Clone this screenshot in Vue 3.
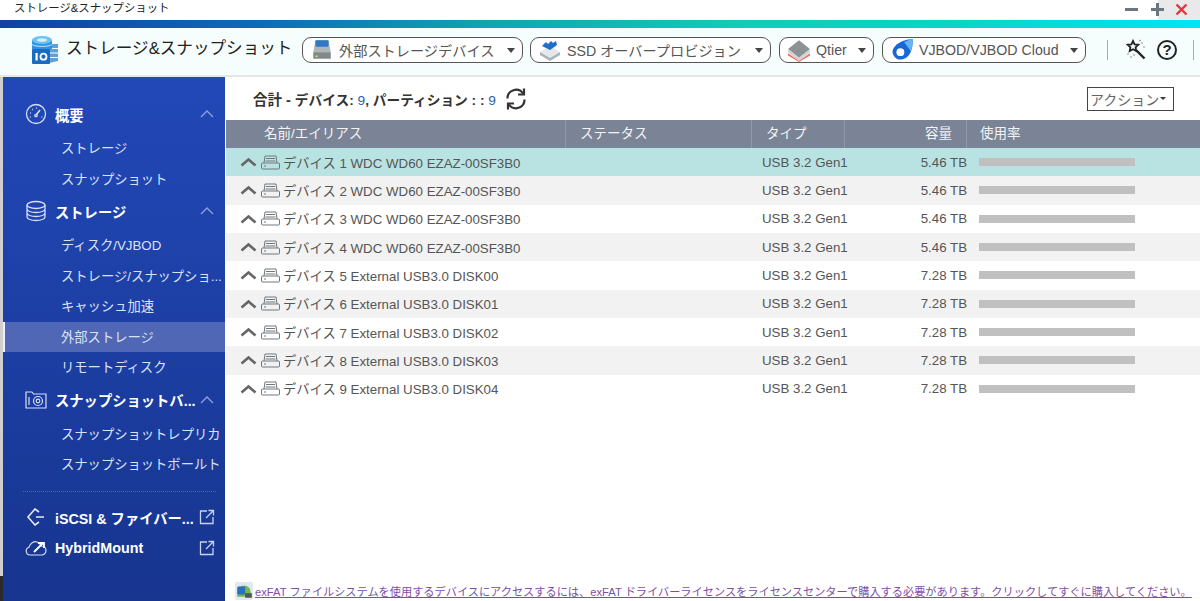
<script setup>
const overview = ['ストレージ', 'スナップショット']
const storage = [
  { label: 'ディスク/VJBOD' },
  { label: 'ストレージ/スナップショ...' },
  { label: 'キャッシュ加速' },
  { label: '外部ストレージ', active: true },
  { label: 'リモートディスク' },
]
const snapshot = ['スナップショットレプリカ', 'スナップショットボールト']

const devices = [
  { name: 'デバイス 1 WDC WD60 EZAZ-00SF3B0', size: '5.46 TB', selected: true },
  { name: 'デバイス 2 WDC WD60 EZAZ-00SF3B0', size: '5.46 TB' },
  { name: 'デバイス 3 WDC WD60 EZAZ-00SF3B0', size: '5.46 TB' },
  { name: 'デバイス 4 WDC WD60 EZAZ-00SF3B0', size: '5.46 TB' },
  { name: 'デバイス 5 External USB3.0 DISK00', size: '7.28 TB' },
  { name: 'デバイス 6 External USB3.0 DISK01', size: '7.28 TB' },
  { name: 'デバイス 7 External USB3.0 DISK02', size: '7.28 TB' },
  { name: 'デバイス 8 External USB3.0 DISK03', size: '7.28 TB' },
  { name: 'デバイス 9 External USB3.0 DISK04', size: '7.28 TB' },
]
</script>

<template>
  <div class="window">
    <div class="titlebar">
      <span class="title">ストレージ&スナップショット</span>
      <div class="win-btns">
        <span class="win-min"></span>
        <span class="win-max"></span>
        <svg class="win-close" width="13" height="13" viewBox="0 0 13 13">
          <path d="M1.5 1.5l10 10M11.5 1.5l-10 10" stroke="#e8343c" stroke-width="2.4" fill="none" />
        </svg>
      </div>
    </div>
    <div class="gradient"></div>

    <div class="toolbar">
      <svg class="app-icon" width="27" height="28" viewBox="0 0 27 28">
        <path d="M18 8h9v17l-9 2z" fill="#5f9fdc" />
        <path d="M19 12.5h8M19 17h8M19 21.5h8" stroke="#fff" stroke-width="1" />
        <path d="M1 4v9h20V4z" fill="#2d93e6" />
        <ellipse cx="11" cy="4" rx="10" ry="4" fill="#6cc3f2" />
        <ellipse cx="11" cy="4" rx="5" ry="1.8" fill="#d4effc" />
        <path d="M1 8.5c3 2.5 17 2.500 20 0" fill="none" stroke="#bfe4fa" stroke-width="1" />
        <rect x="1" y="13" width="18" height="15" rx="1" fill="#1a6cc0" />
        <rect x="4.5" y="17" width="2.2" height="7.5" fill="#fff" />
        <circle cx="12.5" cy="20.7" r="3" fill="none" stroke="#fff" stroke-width="1.8" />
      </svg>
      <span class="app-name">ストレージ&スナップショット</span>

      <button class="pill pill-ext">
        <svg width="24" height="24" viewBox="0 0 22 22">
          <path d="M3 13l2-11h12l2 11z" fill="#aeb6ba" />
          <rect x="5" y="2" width="12" height="6" rx="1" fill="#2f78c4" />
          <rect x="3" y="13" width="16" height="6" fill="#82898c" />
          <rect x="5" y="16" width="2" height="1.5" fill="#c4e84e" />
        </svg>
        <span>外部ストレージデバイス</span>
        <i class="caret"></i>
      </button>
      <button class="pill pill-ssd">
        <svg width="24" height="24" viewBox="0 0 24 22">
          <path d="M2 13l10-6 10 6-10 6z" fill="#e4e8ea" />
          <path d="M2 13v3l10 6 10-6v-3l-10 6z" fill="#a9b4b9" />
          <path d="M4 7l4-4 2 2 3-3 2 2 3-2 1 4-7 5z" fill="#1f6fc9" />
        </svg>
        <span>SSD オーバープロビジョン</span>
        <i class="caret"></i>
      </button>
      <button class="pill pill-qtier">
        <svg width="24" height="24" viewBox="0 0 22 22">
          <path d="M1 10l10-8 10 8-10 8z" fill="#8d9295" />
          <path d="M1 10v3l10 8 10-8v-3l-10 8z" fill="#cfd3d5" />
          <path d="M1 14v2l10 6 10-6v-2l-10 7z" fill="#ef6a55" />
        </svg>
        <span>Qtier</span>
        <i class="caret"></i>
      </button>
      <button class="pill pill-vjbod">
        <svg width="24" height="24" viewBox="0 0 22 22">
          <path d="M21 1c0 5-1 12-4 15-3 4-9 5-12 2S1 11 5 7c3-3 10-6 16-6z" fill="#1668d8" />
          <path d="M21 1c0 4-.5 8-2 11l-6-8c3-1.500 5.500-3 8-3z" fill="#67b4f0" />
          <circle cx="9.5" cy="13" r="3.6" fill="#fff" />
        </svg>
        <span>VJBOD/VJBOD Cloud</span>
        <i class="caret"></i>
      </button>

      <span class="divider"></span>
      <svg class="tool-icon" width="22" height="22" viewBox="0 0 22 22">
        <path d="M8 2l1.6 3.4 3.7.4-2.7 2.6.7 3.7L8 10.3l-3.3 1.8.7-3.7L2.7 5.800l3.7-.4z" fill="none" stroke="#222" stroke-width="1.8" />
        <path d="M11.5 11.5l8 8" stroke="#222" stroke-width="2.4" />
        <path d="M17 4h.01M19 8h.01M15 1.5h.01M3 15h.01M6 18h.01M9 16h.01" stroke="#777" stroke-width="1.5" stroke-linecap="round" />
      </svg>
      <span class="help">?</span>
      <span class="divider last"></span>
    </div>

    <div class="body">
      <div class="edge"></div>
      <aside class="sidebar">
        <div class="group">
          <svg class="group-icon" width="22" height="22" viewBox="0 0 22 22" fill="none" stroke="#d6def5" stroke-width="1.3">
            <circle cx="11" cy="11" r="9.5" />
            <path d="M11 12l4-5" stroke-width="1.6" />
            <circle cx="11" cy="12.5" r="1.2" />
            <path d="M5 10h.8M7 6.500h.8M11 5h.8M4.800 14h.8M16.500 14h.8" stroke-width="1.4" />
          </svg>
          <span class="group-label">概要</span>
          <svg class="chev" width="14" height="8" viewBox="0 0 14 8"><path d="M1 7l6-6 6 6" /></svg>
        </div>
        <div v-for="item in overview" :key="item" class="item">{{ item }}</div>

        <div class="group">
          <svg class="group-icon" width="22" height="22" viewBox="0 0 22 22" fill="none" stroke="#d6def5" stroke-width="1.3">
            <ellipse cx="11" cy="5" rx="9" ry="3.5" />
            <path d="M2 5v12c0 2 4 3.500 9 3.500s9-1.500 9-3.500V5M2 9c0 2 4 3.500 9 3.500S20 11 20 9M2 13c0 2 4 3.500 9 3.500s9-1.500 9-3.500" />
          </svg>
          <span class="group-label">ストレージ</span>
          <svg class="chev" width="14" height="8" viewBox="0 0 14 8"><path d="M1 7l6-6 6 6" /></svg>
        </div>
        <div v-for="item in storage" :key="item.label" class="item" :class="{ active: item.active }">{{ item.label }}</div>

        <div class="group">
          <svg class="group-icon" width="22" height="18" viewBox="0 0 22 18" fill="none" stroke="#d6def5" stroke-width="1.2">
            <path d="M1 1h6l1.500 2H21v14H1z" />
            <circle cx="13" cy="10" r="4.5" />
            <circle cx="13" cy="10" r="1.8" />
            <path d="M4 6v8" />
          </svg>
          <span class="group-label">スナップショットバ...</span>
          <svg class="chev" width="14" height="8" viewBox="0 0 14 8"><path d="M1 7l6-6 6 6" /></svg>
        </div>
        <div v-for="item in snapshot" :key="item" class="item">{{ item }}</div>

        <div class="sep"></div>

        <div class="group link">
          <svg class="group-icon" width="22" height="18" viewBox="0 0 22 18" fill="none" stroke="#e3e8f8" stroke-width="1.6">
            <path d="M14 4l-4-3-7 8 7 8 4-3M11 9h8" />
          </svg>
          <span class="group-label">iSCSI & ファイバー...</span>
          <svg class="ext" width="16" height="16" viewBox="0 0 16 16"><path d="M8 2H1.500v12.500H14V8M7 9l7.500-7.500M9.500 1.500h5v5" /></svg>
        </div>
        <div class="group link">
          <svg class="group-icon" width="22" height="16" viewBox="0 0 22 16" fill="none" stroke="#d6def5" stroke-width="1.2">
            <path d="M5 15a4 4 0 0 1-1-7.800C5 3 9 1 12 2c2 .5 3.500 2 4 4 3 0 5 2 5 4.500S19 15 17 15z" />
            <path d="M9 12l9-9M13 3h6v5" stroke="#fff" stroke-width="1.8" />
          </svg>
          <span class="group-label">HybridMount</span>
          <svg class="ext" width="16" height="16" viewBox="0 0 16 16"><path d="M8 2H1.500v12.500H14V8M7 9l7.500-7.500M9.500 1.500h5v5" /></svg>
        </div>
      </aside>

      <main class="main">
        <div class="summary">
          <div class="totals">
            <b class="total-label">合計 -</b>
            <span class="total-text">デバイス: <em>9</em>, パーティション : : <em>9</em></span>
            <svg class="refresh" width="22" height="24" viewBox="0 0 22 24" fill="none" stroke="#333" stroke-width="2.2">
              <path d="M2.500 11.500A8.500 8.500 0 0 1 18 6.500" />
              <path d="M19 1.500v6h-6" />
              <path d="M19.500 12.500A8.500 8.500 0 0 1 4 17.500" />
              <path d="M3 22.500v-6h6" />
            </svg>
          </div>
          <button class="action">アクション<i class="mini-caret"></i></button>
        </div>

        <div class="table">
          <div class="row head">
            <div class="c-name">名前/エイリアス</div>
            <div class="c-status">ステータス</div>
            <div class="c-type">タイプ</div>
            <div class="c-size">容量</div>
            <div class="c-usage">使用率</div>
          </div>
          <div v-for="d in devices" :key="d.name" class="row dev" :class="{ selected: d.selected }">
            <div class="c-name">
              <svg class="up" width="17" height="10" viewBox="0 0 17 10"><path d="M1.500 8.500L8.500 2.500l7 6" /></svg>
              <svg class="disk" width="19" height="15" viewBox="0 0 19 15" fill="none" stroke="#70787c" stroke-width="1">
                <path d="M3 8l1-7h11l1 7" />
                <path d="M5 3.500h9M4.500 6h10" />
                <rect x=".5" y="8" width="18" height="6" rx="1" />
                <path d="M3 11h2" />
              </svg>
              <span>{{ d.name }}</span>
            </div>
            <div class="c-status"></div>
            <div class="c-type">USB 3.2 Gen1</div>
            <div class="c-size">{{ d.size }}</div>
            <div class="c-usage"><span class="bar"></span></div>
          </div>
        </div>

        <div class="notice">
          <svg width="18" height="18" viewBox="0 0 16 16">
            <rect x="0" y="0" width="16" height="16" rx="2" fill="#dfe9f2" />
            <path d="M2 9a6 6 0 0 1 12 0v4H2z" fill="#72b84a" />
            <rect x="2" y="4" width="7" height="7" rx="1" fill="#2a6fc0" />
            <rect x="9" y="10" width="6" height="4" fill="#555" />
          </svg>
          <a>exFAT ファイルシステムを使用するデバイスにアクセスするには、exFAT ドライバーライセンスをライセンスセンターで購入する必要があります。クリックしてすぐに購入してください。</a>
        </div>
      </main>
    </div>
  </div>
</template>

<style>
html, body {
  margin: 0;
  background: #fff;
}
</style>

<style scoped>
.window {
  width: 1200px;
  height: 601px;
  display: flex;
  flex-direction: column;
  overflow: hidden;
  background: #fff;
  font-family: "Liberation Sans", "Noto Sans CJK JP", sans-serif;
}

.titlebar {
  height: 20px;
  flex: none;
  display: flex;
  align-items: flex-start;
  justify-content: space-between;
  padding-left: 14px;
}
.title {
  font-size: 11.4px;
  line-height: 16px;
  color: #222;
}
.win-btns {
  width: 42px;
  height: 20px;
  position: relative;
  margin-right: 13px;
}
.win-btns::before {
  content: "";
  position: absolute;
  left: 13px;
  right: -13px;
  top: 0;
  bottom: 0;
  background: #e9e9e9;
}
.win-min {
  position: absolute;
  left: -20px;
  top: 8px;
  width: 13px;
  height: 3px;
  background: #6b7680;
}
.win-max {
  position: absolute;
  left: 6px;
  top: 3px;
  width: 13px;
  height: 13px;
  background: linear-gradient(#6b7680, #6b7680) center / 13px 3px no-repeat,
    linear-gradient(#6b7680, #6b7680) center / 3px 13px no-repeat;
}
.win-close {
  position: absolute;
  left: 30px;
  top: 3px;
}

.gradient {
  height: 8px;
  flex: none;
  background: linear-gradient(90deg, #123fa5 0%, #0d6cb8 22%, #0fa4b0 40%, #10cdb7 62%, #0cd4c6 80%, #00e5f5 100%);
}

.toolbar {
  height: 49px;
  flex: none;
  box-sizing: border-box;
  display: flex;
  align-items: center;
  background: #f6fdfd;
  border-bottom: 2px solid #e6e8e8;
  padding: 0 0 3px 31px;
}
.app-icon {
  flex: none;
}
.app-name {
  margin-left: 8px;
  margin-bottom: 7px;
  font-size: 16.6px;
  color: #222;
  white-space: nowrap;
  width: 236px;
  flex: none;
}
.pill {
  height: 26px;
  box-sizing: border-box;
  display: flex;
  align-items: center;
  border: 1px solid #555;
  border-radius: 9px;
  background: #fff;
  padding: 0 7px;
  font-family: inherit;
  font-size: 14.2px;
  color: #555;
  white-space: nowrap;
  margin-right: 8px;
  flex: none;
}
.pill svg {
  flex: none;
}
.pill span {
  margin-left: 5px;
}
.pill-ext { width: 221px; margin-right: 7px; }
.pill-ssd { width: 241px; }
.pill-qtier { width: 95px; }
.pill-vjbod { width: 204px; margin-right: 21px; }
.caret {
  margin-left: auto;
  width: 0;
  height: 0;
  border-left: 4px solid transparent;
  border-right: 4px solid transparent;
  border-top: 5px solid #444;
}
.divider {
  width: 1px;
  height: 20px;
  background: #aaa;
  flex: none;
}
.divider.last {
  margin-left: 16px;
}
.tool-icon {
  margin-left: 17px;
  flex: none;
}
.help {
  margin-left: 10px;
  width: 20px;
  height: 20px;
  box-sizing: border-box;
  border: 2px solid #222;
  border-radius: 50%;
  font-size: 15px;
  font-weight: 700;
  line-height: 16px;
  text-align: center;
  color: #222;
  flex: none;
}

.body {
  flex: 1;
  min-height: 0;
  display: flex;
}
.edge {
  width: 3px;
  flex: none;
  background: linear-gradient(#cfcfcf 0, #cfcfcf 499px, #2b2b2b 499px);
}

.sidebar {
  width: 222px;
  flex: none;
  box-sizing: border-box;
  padding-top: 20px;
  background: linear-gradient(#2248b8, #17358f);
  color: #fff;
}
.group {
  height: 36px;
  box-sizing: border-box;
  padding: 0 0 2px 22px;
  display: flex;
  align-items: center;
  position: relative;
}
.group-icon {
  width: 22px;
  flex: none;
}
.group-label {
  margin-left: 8px;
  font-size: 14.3px;
  font-weight: 700;
  white-space: nowrap;
}
.chev {
  position: absolute;
  right: 11px;
  top: 13px;
  fill: none;
  stroke: #8ea2dc;
  stroke-width: 1.3;
}
.ext {
  position: absolute;
  right: 10px;
  top: 7px;
  fill: none;
  stroke: #c8d2f0;
  stroke-width: 1.3;
}
.item {
  height: 30.5px;
  line-height: 32px;
  padding-left: 58px;
  font-size: 13.3px;
  color: #dbe2f6;
  white-space: nowrap;
}
.item.active {
  background: #4f67b5;
  border-left: 2px solid #eef;
  padding-left: 56px;
}
.sep {
  margin: 11px 9px 10px 20px;
  border-top: 1px dotted #4a66bb;
}
.group.link {
  height: 31px;
  padding-bottom: 0;
}

.main {
  flex: 1;
  min-width: 0;
  display: flex;
  flex-direction: column;
  margin-left: 1px;
}
.summary {
  height: 43px;
  flex: none;
  display: flex;
  align-items: center;
  justify-content: space-between;
  padding: 0 26px 0 27px;
}
.totals {
  display: flex;
  align-items: center;
  color: #333;
}
.total-label {
  font-size: 14.5px;
  margin-right: 4px;
}
.total-text {
  font-size: 13.7px;
  font-weight: 700;
}
.total-text em {
  font-style: normal;
  font-weight: 400;
  color: #2d5fae;
}
.refresh {
  margin-left: 9px;
}
.action {
  height: 24px;
  width: 87px;
  padding: 0 0 0 2px;
  box-sizing: border-box;
  display: flex;
  align-items: center;
  border: 1px solid #444;
  background: #fff;
  font-family: inherit;
  font-size: 14px;
  color: #666;
  white-space: nowrap;
}
.mini-caret {
  width: 0;
  height: 0;
  margin-left: 1px;
  border-left: 3px solid transparent;
  border-right: 3px solid transparent;
  border-top: 3.5px solid #333;
}

.row {
  display: grid;
  grid-template-columns: 340px 186px 93px 122px 1fr;
  align-items: center;
}
.head {
  height: 28px;
  background: #7b8496;
  color: #f2f4f6;
  font-size: 13.5px;
}
.head > div {
  height: 28px;
  line-height: 27px;
  box-sizing: border-box;
  border-right: 1px solid #929aa9;
}
.head .c-name { padding-left: 38px; }
.head .c-status { padding-left: 14px; }
.head .c-type { padding-left: 14px; }
.head .c-size { text-align: right; padding-right: 14px; }
.head .c-usage { padding-left: 13px; border-right: 0; }

.dev {
  height: 28.33px;
  font-size: 13.3px;
  color: #555;
  white-space: nowrap;
}
.dev:nth-child(odd) {
  background: #f2f2f2;
}
.dev.selected {
  background: #b9e3e2;
}
.dev .c-name {
  display: flex;
  align-items: center;
  padding-left: 14px;
}
.up {
  fill: none;
  stroke: #666;
  stroke-width: 2.6;
  flex: none;
}
.disk {
  margin-left: 4px;
  margin-right: 3px;
  flex: none;
}
.dev .c-type {
  padding-left: 10px;
}
.dev .c-size {
  text-align: right;
}
.dev .c-usage {
  padding-left: 12px;
}
.bar {
  display: block;
  width: 156px;
  height: 8px;
  background: #c0c0c0;
}

.notice {
  margin-top: auto;
  height: 20px;
  flex: none;
  display: flex;
  align-items: center;
  padding-left: 9px;
  white-space: nowrap;
}
.notice svg {
  flex: none;
}
.notice a {
  margin-left: 2px;
  font-size: 11.2px;
  color: #7d4ea6;
  text-decoration: underline;
}
</style>
